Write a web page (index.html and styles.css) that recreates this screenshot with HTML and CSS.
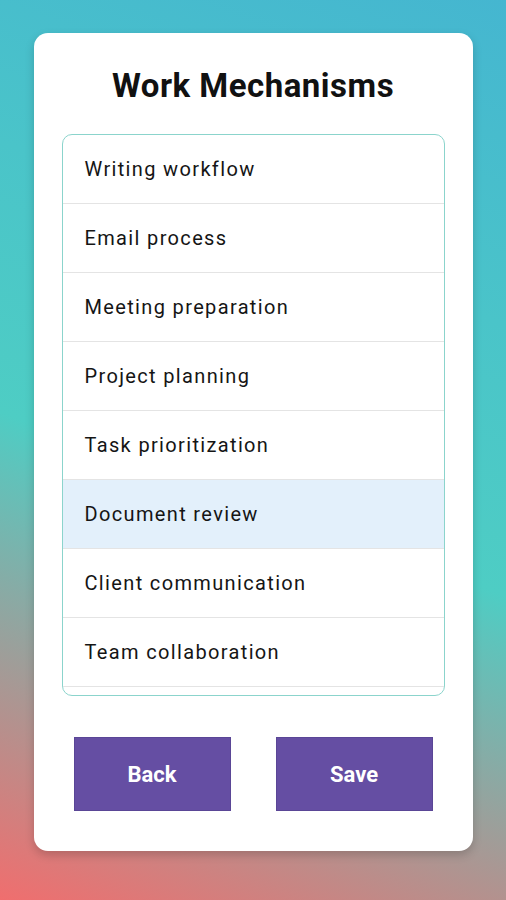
FILE: index.html
```html
<!DOCTYPE html>
<html lang="en">
<head>
<meta charset="utf-8">
<meta name="viewport" content="width=device-width, initial-scale=1">
<title>Work Mechanisms</title>
<link rel="stylesheet" href="styles.css">
</head>
<body>
<div class="screen">
  <div class="card">
    <h1 class="title">Work Mechanisms</h1>
    <ul class="list">
      <li class="item">Writing workflow</li>
      <li class="item">Email process</li>
      <li class="item">Meeting preparation</li>
      <li class="item">Project planning</li>
      <li class="item">Task prioritization</li>
      <li class="item item-selected">Document review</li>
      <li class="item">Client communication</li>
      <li class="item">Team collaboration</li>
      <li class="item">Time management</li>
      <li class="item">Feedback loop</li>
    </ul>
    <div class="actions">
      <button class="btn" type="button">Back</button>
      <button class="btn" type="button">Save</button>
    </div>
  </div>
</div>
</body>
</html>
```
FILE: styles.css
```css
html, body {
  margin: 0;
  padding: 0;
}

body {
  font-family: Roboto, "Liberation Sans", sans-serif;
  width: 506px;
  height: 900px;
  overflow: hidden;
}

.screen {
  width: 506px;
  height: 900px;
  box-sizing: border-box;
  padding-top: 33px;
  background: linear-gradient(20deg, #f06e6e 0%, #4ecdc4 45%, #4ac4c9 70%, #45b6d0 100%);
}

.card {
  width: 439px;
  margin: 0 auto;
  box-sizing: border-box;
  padding: 28px 28px 40px;
  background: #ffffff;
  border-radius: 14px;
  box-shadow: 0 4px 10px rgba(0, 0, 0, 0.18);
}

.title {
  margin: 8px 0 32px;
  font-size: 33px;
  line-height: 33px;
  font-weight: 700;
  letter-spacing: 0.5px;
  color: #111111;
  text-align: center;
}

.list {
  list-style: none;
  margin: 0;
  padding: 0;
  height: 562px;
  box-sizing: border-box;
  overflow: hidden;
  border: 1px solid #8bd4cc;
  border-radius: 10px;
}

.item {
  height: 69px;
  box-sizing: border-box;
  display: flex;
  align-items: center;
  padding: 0 22px;
  border-bottom: 1px solid #e4e4e4;
  font-size: 20px;
  letter-spacing: 1.35px;
  color: #151515;
}

.item-selected {
  background: #e3f0fb;
}

.actions {
  display: flex;
  justify-content: center;
  gap: 45px;
  margin-top: 41px;
}

.btn {
  width: 157px;
  height: 74px;
  border: 1px solid #5a4696;
  border-radius: 0;
  background: #654ea3;
  color: #ffffff;
  font-family: Roboto, "Liberation Sans", sans-serif;
  font-size: 22px;
  font-weight: 700;
  padding: 0;
}
```
